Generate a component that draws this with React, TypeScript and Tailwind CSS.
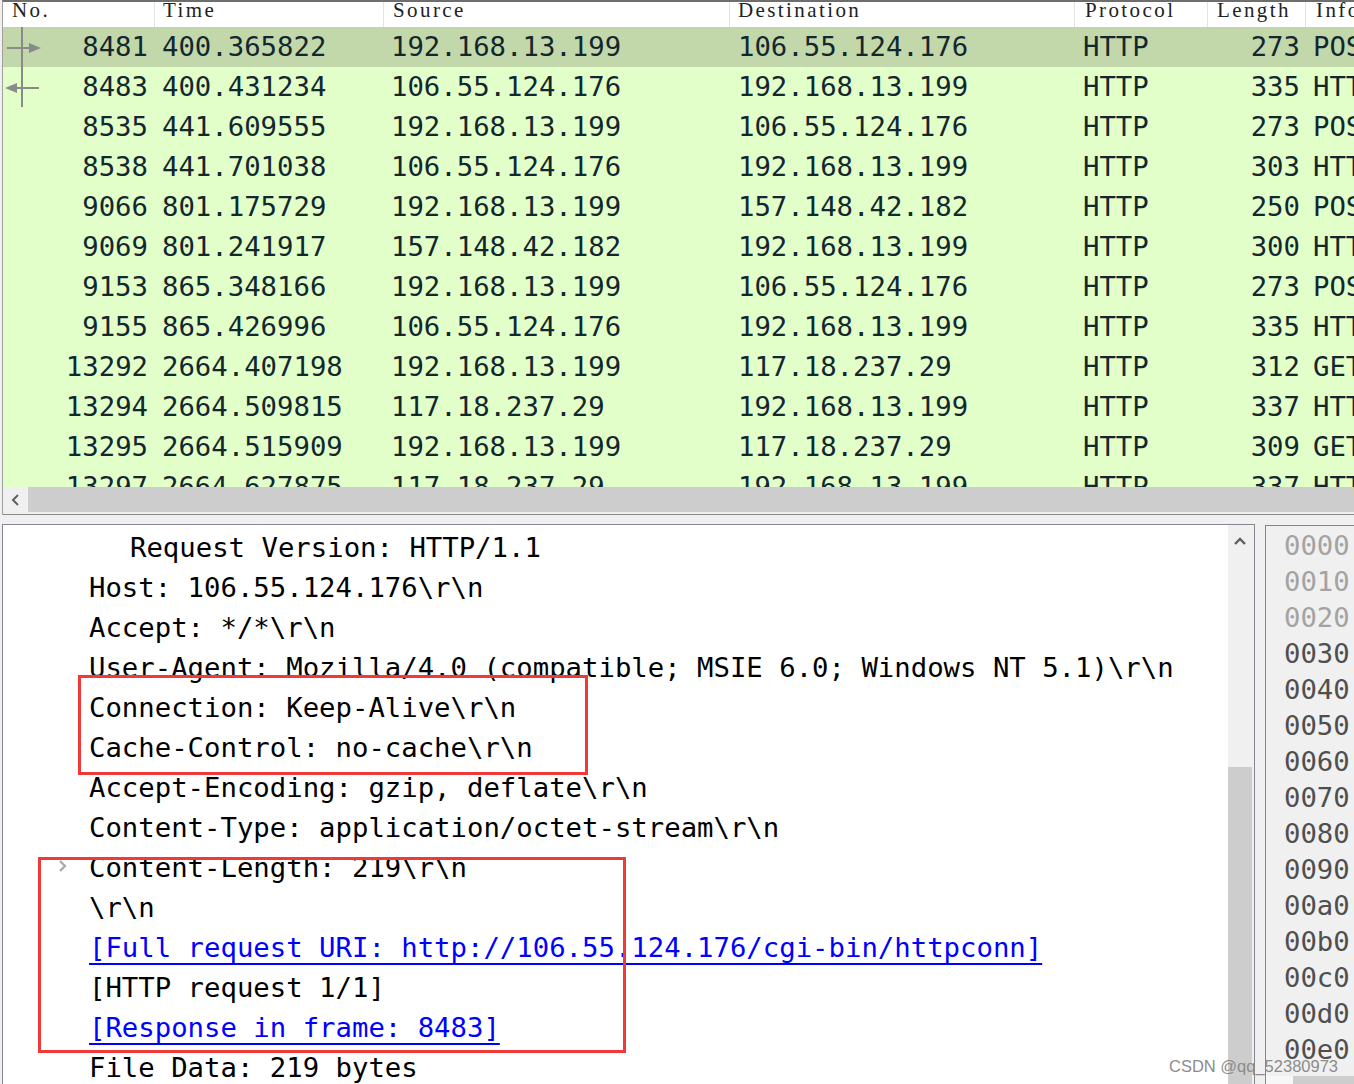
import React from 'react';

interface Packet {
    no: string;
    time: string;
    src: string;
    dst: string;
    proto: string;
    len: string;
    info: string;
}

const packets: Packet[] = [
    { no: '8481', time: '400.365822', src: '192.168.13.199', dst: '106.55.124.176', proto: 'HTTP', len: '273', info: 'POST /cgi-bin/httpconn HTTP/1.1  (application/octet-stream)' },
    { no: '8483', time: '400.431234', src: '106.55.124.176', dst: '192.168.13.199', proto: 'HTTP', len: '335', info: 'HTTP/1.1 200 OK  (application/octet-stream)' },
    { no: '8535', time: '441.609555', src: '192.168.13.199', dst: '106.55.124.176', proto: 'HTTP', len: '273', info: 'POST /cgi-bin/httpconn HTTP/1.1  (application/octet-stream)' },
    { no: '8538', time: '441.701038', src: '106.55.124.176', dst: '192.168.13.199', proto: 'HTTP', len: '303', info: 'HTTP/1.1 200 OK  (application/octet-stream)' },
    { no: '9066', time: '801.175729', src: '192.168.13.199', dst: '157.148.42.182', proto: 'HTTP', len: '250', info: 'POST /cgi-bin/httpconn HTTP/1.1  (application/octet-stream)' },
    { no: '9069', time: '801.241917', src: '157.148.42.182', dst: '192.168.13.199', proto: 'HTTP', len: '300', info: 'HTTP/1.1 200 OK  (application/octet-stream)' },
    { no: '9153', time: '865.348166', src: '192.168.13.199', dst: '106.55.124.176', proto: 'HTTP', len: '273', info: 'POST /cgi-bin/httpconn HTTP/1.1  (application/octet-stream)' },
    { no: '9155', time: '865.426996', src: '106.55.124.176', dst: '192.168.13.199', proto: 'HTTP', len: '335', info: 'HTTP/1.1 200 OK  (application/octet-stream)' },
    { no: '13292', time: '2664.407198', src: '192.168.13.199', dst: '117.18.237.29', proto: 'HTTP', len: '312', info: 'GET /MFEwTzBNMEswSTAJBgUrDgMCGgUA HTTP/1.1' },
    { no: '13294', time: '2664.509815', src: '117.18.237.29', dst: '192.168.13.199', proto: 'HTTP', len: '337', info: 'HTTP/1.1 304 Not Modified' },
    { no: '13295', time: '2664.515909', src: '192.168.13.199', dst: '117.18.237.29', proto: 'HTTP', len: '309', info: 'GET /MFEwTzBNMEswSTAJBgUrDgMCGgUA HTTP/1.1' },
    { no: '13297', time: '2664.627875', src: '117.18.237.29', dst: '192.168.13.199', proto: 'HTTP', len: '337', info: 'HTTP/1.1 304 Not Modified' },
];

interface DetailLine {
    text: string;
    indent?: boolean;
    link?: boolean;
    expandable?: boolean;
}

const details: DetailLine[] = [
    { text: 'Request Version: HTTP/1.1', indent: true },
    { text: 'Host: 106.55.124.176\\r\\n' },
    { text: 'Accept: */*\\r\\n' },
    { text: 'User-Agent: Mozilla/4.0 (compatible; MSIE 6.0; Windows NT 5.1)\\r\\n' },
    { text: 'Connection: Keep-Alive\\r\\n' },
    { text: 'Cache-Control: no-cache\\r\\n' },
    { text: 'Accept-Encoding: gzip, deflate\\r\\n' },
    { text: 'Content-Type: application/octet-stream\\r\\n' },
    { text: 'Content-Length: 219\\r\\n', expandable: true },
    { text: '\\r\\n' },
    { text: '[Full request URI: http://106.55.124.176/cgi-bin/httpconn]', link: true },
    { text: '[HTTP request 1/1]' },
    { text: '[Response in frame: 8483]', link: true },
    { text: 'File Data: 219 bytes' },
];

const offsets = ['0000', '0010', '0020', '0030', '0040', '0050', '0060', '0070', '0080', '0090', '00a0', '00b0', '00c0', '00d0', '00e0'];

const mono = "font-['DejaVu_Sans_Mono','Liberation_Mono',monospace] text-[27.3px]";

function RelatedMark({ dir }: { dir: 'out' | 'in' }) {
    return (
        <svg width="44" height="40" viewBox="0 0 44 40" className="shrink-0">
            <line x1="19" y1="0" x2="19" y2="40" stroke="#8a8a8a" strokeWidth="2" />
            {dir === 'out' ? (
                <>
                    <line x1="4" y1="21" x2="28" y2="21" stroke="#8a8a8a" strokeWidth="2" />
                    <polygon points="26,16 38,21 26,26" fill="#8a8a8a" />
                </>
            ) : (
                <>
                    <line x1="12" y1="21" x2="36" y2="21" stroke="#8a8a8a" strokeWidth="2" />
                    <polygon points="14,16 2,21 14,26" fill="#8a8a8a" />
                </>
            )}
        </svg>
    );
}

function PacketList() {
    return (
        <div className="ml-[2px] border-l border-t-2 border-l-[#a0a0a0] border-t-[#6e6e6e] bg-white overflow-hidden">
            {/* Column header */}
            <div className="h-[25px] flex bg-white overflow-hidden text-[#222] font-['Liberation_Serif',serif] text-[21px] tracking-[2.4px] leading-[20px]">
                <div className="w-[152px] shrink-0 pl-[9px] border-r border-[#e3e3e3] -mt-[2px]">No.</div>
                <div className="w-[229px] shrink-0 pl-[8px] border-r border-[#e3e3e3] -mt-[2px]">Time</div>
                <div className="w-[346px] shrink-0 pl-[9px] border-r border-[#e3e3e3] -mt-[2px]">Source</div>
                <div className="w-[345px] shrink-0 pl-[8px] border-r border-[#e3e3e3] -mt-[2px]">Destination</div>
                <div className="w-[133px] shrink-0 pl-[10px] border-r border-[#e3e3e3] -mt-[2px]">Protocol</div>
                <div className="w-[98px] shrink-0 pl-[9px] border-r border-[#e3e3e3] -mt-[2px]">Length</div>
                <div className="flex-1 pl-[10px] whitespace-nowrap -mt-[2px]">Info</div>
            </div>

            {/* Rows */}
            <div className={`h-[460px] overflow-hidden text-[#12272e] leading-[40px] ${mono}`}>
                {packets.map((p, i) => (
                    <div
                        key={p.no}
                        className={`h-[40px] flex whitespace-nowrap ${i === 0 ? 'bg-[#c3d8aa]' : 'bg-[#e2fec9]'}`}
                    >
                        <div className="w-[152px] shrink-0 flex pr-[7px]">
                            {i === 0 && <RelatedMark dir="out" />}
                            {i === 1 && <RelatedMark dir="in" />}
                            <span className="ml-auto">{p.no}</span>
                        </div>
                        <div className="w-[229px] shrink-0 pl-[7px]">{p.time}</div>
                        <div className="w-[346px] shrink-0 pl-[7px]">{p.src}</div>
                        <div className="w-[345px] shrink-0 pl-[8px]">{p.dst}</div>
                        <div className="w-[133px] shrink-0 pl-[8px]">{p.proto}</div>
                        <div className="w-[98px] shrink-0 pr-[6px] text-right">{p.len}</div>
                        <div className="flex-1 pl-[7px]">{p.info}</div>
                    </div>
                ))}
            </div>

            {/* Horizontal scrollbar */}
            <div className="h-[25px] flex">
                <div className="w-[25px] shrink-0 bg-[#f0f0f0] flex items-center justify-center">
                    <svg width="10" height="12" viewBox="0 0 10 12">
                        <polyline points="7,1 2,6 7,11" fill="none" stroke="#606060" strokeWidth="2" />
                    </svg>
                </div>
                <div className="flex-1 bg-[#cdcdcd]" />
            </div>
            <div className="h-[2px] bg-[#f0f0f0] border-b border-[#8a8a8a] box-content" />
        </div>
    );
}

function DetailPane() {
    return (
        <div className="w-[1253px] ml-[2px] h-[600px] shrink-0 flex bg-white border border-b-0 border-[#828790]">
            <div className={`flex-1 pt-[3px] text-black leading-[40px] whitespace-nowrap overflow-hidden ${mono}`}>
                {details.map((d, i) => (
                    <div key={i} className={`h-[40px] flex items-center ${d.indent ? 'pl-[127px]' : 'pl-[86px]'}`}>
                        {d.expandable && (
                            <svg width="10" height="14" viewBox="0 0 10 14" className="-ml-[31px] mr-[21px] -mt-[4px]">
                                <polyline points="2,2 7,7 2,12" fill="none" stroke="#a8a8a8" strokeWidth="2.2" />
                            </svg>
                        )}
                        {d.link ? (
                            <span className="text-[#0000ff] underline decoration-2 underline-offset-[6px]">{d.text}</span>
                        ) : (
                            <span>{d.text}</span>
                        )}
                    </div>
                ))}
            </div>
            <div className="w-[26px] shrink-0 bg-[#f0f0f0] flex flex-col">
                <div className="h-[32px] flex items-center justify-center pr-[2px]">
                    <svg width="12" height="8" viewBox="0 0 12 8">
                        <polyline points="1,7 6,2 11,7" fill="none" stroke="#606060" strokeWidth="2.4" />
                    </svg>
                </div>
                <div className="h-[210px]" />
                <div className="flex-1 w-[24px] bg-[#cdcdcd]" />
            </div>
        </div>
    );
}

function HexPane() {
    return (
        <div className="flex-1 ml-[10px] mt-[1px] h-[600px] bg-[#f0f0f0] border-l border-t border-[#828790] flex flex-col overflow-hidden">
            <div className={`pt-[2px] pl-[18px] leading-[36px] whitespace-nowrap ${mono}`}>
                {offsets.map((o, i) => (
                    <div key={o} className={`h-[36px] ${i < 3 ? 'text-[#a3a3a3]' : 'text-[#4f4f4f]'}`}>
                        {o}
                    </div>
                ))}
            </div>
            <div className="mt-[8px] h-[24px] flex">
                <div className="w-[27px] shrink-0 bg-[#f7f7f7]" />
                <div className="flex-1 bg-[#cdcdcd]" />
            </div>
        </div>
    );
}

export default function App() {
    return (
        <div className="relative w-[1354px] h-[1084px] overflow-hidden bg-[#f0f0f0]">
            <PacketList />
            <div className="mt-[9px] flex">
                <DetailPane />
                <HexPane />
            </div>

            {/* Annotation boxes */}
            <div className="absolute left-[78px] top-[675px] w-[510px] h-[100px] border-[3px] border-[#f03a3a]" />
            <div className="absolute left-[38px] top-[857px] w-[588px] h-[196px] border-[3px] border-[#f03a3a]" />

            {/* Watermark */}
            <div className="absolute left-[1169px] top-[1056px] font-['Liberation_Sans',Arial,sans-serif] text-[16.5px] leading-[20px] text-[#8c8c8c] whitespace-nowrap">
                CSDN @qq_52380973
            </div>
        </div>
    );
}
